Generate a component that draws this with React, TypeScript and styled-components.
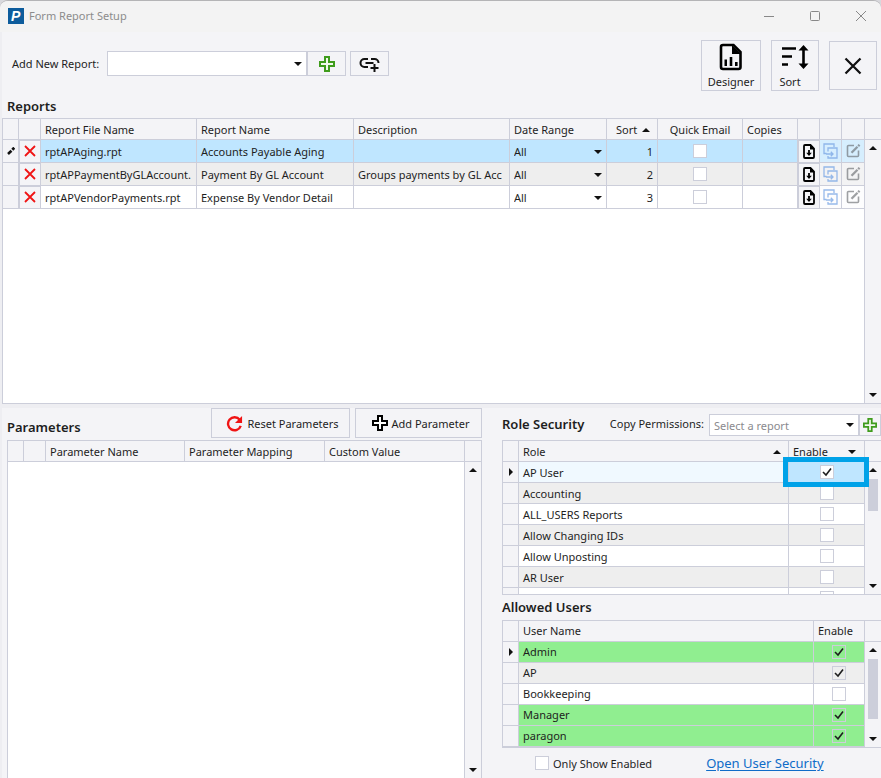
import React from "react";
import styled, { createGlobalStyle, css } from "styled-components";

const line = "#ccceda";
const panel = "#f4f4f7";
const ink = "#1e1e1e";

const GlobalStyle = createGlobalStyle`
  *, *::before, *::after { box-sizing: border-box; }
  body { margin: 0; background: #d8d8dc; }
  body, button, select, input {
    font-family: "Noto Sans", "Open Sans", sans-serif;
    font-size: 11px;
    color: ${ink};
  }
`;

const Window = styled.main`
  display: flex;
  flex-direction: column;
  height: 100vh;
  min-height: 640px;
  overflow: hidden;
  border-top: 1px solid #b4b4b6;
  border-radius: 8px 8px 0 0;
  background: #eeeef2;
`;

const TitleBar = styled.header`
  display: flex;
  align-items: center;
  flex: none;
  height: 31px;
  padding: 0 0 2px 8px;
  gap: 5px;
  background: #f3f3f3;
  color: #8c8c8c;
`;

const Title = styled.span`
  flex: 1;
  line-height: 16px;
`;

const WindowButton = styled.button`
  display: grid;
  place-items: center;
  width: 41px;
  height: 28px;
  padding: 0;
  border: 0;
  background: none;
`;

const Body = styled.div`
  display: flex;
  flex-direction: column;
  flex: 1;
  min-height: 0;
  padding-left: 2px;
`;

const ReportsPane = styled.section`
  display: flex;
  flex-direction: column;
  flex: 372 1 0;
  min-height: 0;
  background: ${panel};
`;

const Toolbar = styled.div`
  display: flex;
  justify-content: space-between;
  padding: 8px 4px 4px 10px;
`;

const AddReport = styled.div`
  display: flex;
  align-items: center;
  height: 47px;

  label { width: 95px; white-space: nowrap; }
`;

const Actions = styled.div`
  display: flex;
  align-items: center;
  gap: 10px;
`;

const Button = styled.button<{ $w?: number; $h?: number; $gap?: number }>`
  display: flex;
  align-items: center;
  justify-content: center;
  gap: ${(p) => p.$gap ?? 0}px;
  flex: none;
  width: ${(p) => (p.$w ? `${p.$w}px` : "auto")};
  height: ${(p) => p.$h ?? 25}px;
  padding: 0;
  border: 1px solid ${line};
  background: ${panel};
  white-space: nowrap;
`;

const LinkButton = styled(Button)`
  margin-left: 4px;
`;

const CommandButton = styled(Button)`
  padding-left: 4px;
`;

const TileButton = styled(Button)`
  flex-direction: column;
  padding-top: 2px;
  line-height: 16px;
`;

const SortLabel = styled.span`
  padding-right: 10px;
`;

const Heading = styled.h2<{ $h?: number }>`
  margin: 0;
  font-size: 13px;
  font-weight: 600;
  line-height: ${(p) => p.$h ?? 22}px;
  white-space: nowrap;
`;

const ReportsHeading = styled(Heading)`
  padding: 0 5px 1px;
`;

const Frame = styled.div<{ $grow?: number; $open?: boolean }>`
  display: flex;
  flex: ${(p) => p.$grow ?? 1} 1 0;
  min-height: 0;
  overflow: hidden;
  border: 1px solid ${line};
  border-width: ${(p) => (p.$open ? "1px 1px 0 1px" : "1px 0 1px 1px")};
  background: #fff;
`;

const TableArea = styled.div`
  flex: 1;
  min-width: 0;
  border-right: 1px solid ${line};
`;

const Table = styled.table<{ $row: number }>`
  width: 100%;
  table-layout: fixed;
  border-collapse: separate;
  border-spacing: 0;

  th, td {
    height: ${(p) => p.$row}px;
    padding: 1px 0 0 4px;
    border: solid ${line};
    border-width: 0 1px 1px 0;
    overflow: hidden;
    text-align: left;
    font-weight: 400;
    line-height: 16px;
    white-space: nowrap;
  }
  th { height: 21px; background: ${panel}; }
  th:last-child, td:last-child { border-right: 0; }
  tbody th { height: ${(p) => p.$row}px; padding: 0; text-align: center; line-height: 0; }
`;

const Col = styled.col<{ $w?: number }>`
  width: ${(p) => (p.$w ? `${p.$w}px` : "auto")};
`;

type Tone = "plain" | "alt" | "selected" | "current" | "green";
const tones: Record<Tone, string> = {
  plain: "#ffffff",
  alt: "#eeeeee",
  selected: "#bfe6ff",
  current: "#f0f9ff",
  green: "#90ee90",
};

const Row = styled.tr<{ $tone: Tone }>`
  td { background: ${(p) => tones[p.$tone]}; }
`;

const NumberCell = styled.td`
  && { padding-right: 4px; text-align: right; }
`;

const centered = css`
  && { padding: 0; text-align: center; line-height: 0; }
`;
const CenterCell = styled.td`${centered}`;
const CenterHead = styled.th`&& { padding: 1px 0 0; text-align: center; }`;

const MarkedCell = styled(CenterCell)`
  && { position: relative; overflow: visible; background: ${tones.selected}; }

  &::after {
    content: "";
    position: absolute;
    z-index: 1;
    inset: -5px -5px -5px -6px;
    border: 5px solid #00a2e8;
    pointer-events: none;
  }
`;

const HeadSplit = styled.div<{ $pad: number }>`
  display: flex;
  align-items: center;
  justify-content: space-between;
  padding-right: ${(p) => p.$pad}px;
`;

const SortHeadText = styled.span`
  padding-left: 5px;
`;

const CellButton = styled.button<{ $faded?: boolean }>`
  display: grid;
  place-items: center;
  width: 100%;
  height: 22px;
  padding: 0;
  border: solid ${line};
  border-width: ${(p) => (p.$faded ? "0" : "1px 0 0 1px")};
  background: ${(p) => (p.$faded ? "rgba(250, 250, 252, 0.4)" : panel)};
`;

const DeleteButton = styled(CellButton)`
  padding-bottom: 2px;
`;

const ScrollTrack = styled.div`
  display: flex;
  flex-direction: column;
  align-items: center;
  flex: none;
  width: 16px;
  background: ${panel};
`;

const ScrollCap = styled.div`
  flex: none;
  width: 100%;
  height: 21px;
  border-bottom: 1px solid ${line};
`;

const ScrollButton = styled.button`
  display: grid;
  place-items: center;
  flex: none;
  width: 16px;
  height: 16px;
  padding: 0;
  border: 0;
  background: none;
`;

const Thumb = styled.div<{ $share: number }>`
  width: 10px;
  flex: ${(p) => p.$share} 1 0;
  background: ${line};
`;

const Spare = styled.div<{ $share: number }>`
  flex: ${(p) => p.$share} 1 0;
`;

const SelectBox = styled.div<{ $w?: number; $h?: number; $bare?: boolean }>`
  display: grid;
  align-items: center;
  width: ${(p) => (p.$w ? `${p.$w}px` : "100%")};
  height: ${(p) => p.$h ?? 25}px;
  border: ${(p) => (p.$bare ? "0" : `1px solid ${line}`)};
  background: ${(p) => (p.$bare ? "transparent" : "#fff")};

  > * { grid-area: 1 / 1; }
  > svg { justify-self: end; margin-right: 4px; pointer-events: none; }
`;

const Select = styled.select<{ $bare?: boolean; $muted?: boolean }>`
  appearance: none;
  width: 100%;
  height: 100%;
  padding: 0 16px 0 ${(p) => (p.$bare ? 0 : 4)}px;
  border: 0;
  background: transparent;
  color: ${(p) => (p.$muted ? "#8a8a8e" : ink)};
`;

const Lower = styled.div`
  display: grid;
  grid-template-columns: minmax(0, 480fr) minmax(0, 379fr);
  column-gap: 20px;
  flex: 370 1 0;
  min-height: 0;
  margin-top: 4px;
  background: ${panel};
`;

const ParametersPane = styled.section`
  display: flex;
  flex-direction: column;
  min-height: 0;
  padding-left: 5px;
`;

const SecurityPane = styled.section`
  display: flex;
  flex-direction: column;
  min-height: 0;
`;

const PaneHeader = styled.div`
  display: flex;
  align-items: flex-start;
  flex: none;
  height: 32px;
`;

const ParametersHeading = styled(Heading)`
  flex: 1;
`;

const ButtonPair = styled.div`
  display: flex;
  gap: 5px;
`;

const CopyPermissions = styled.div`
  display: flex;
  flex: 1;
  justify-content: flex-end;

  label { line-height: 32px; padding-right: 5px; white-space: nowrap; }
`;

const CopyControls = styled.div`
  display: flex;
  padding-top: 6px;
`;

const UsersHeading = styled(Heading)`
  flex: none;
`;

const Footer = styled.footer`
  display: flex;
  align-items: center;
  flex: none;
  height: 30px;
  padding-left: 33px;
  gap: 54px;

  label { display: flex; align-items: center; gap: 4px; white-space: nowrap; }
  a { color: #0f6cc8; font-size: 13px; white-space: nowrap; text-underline-offset: 2px; }
`;

const CheckBox = styled.span`
  display: inline-grid;
  place-items: center;
  vertical-align: middle;

  > * { grid-area: 1 / 1; }
  > svg { pointer-events: none; }
`;

const CheckInput = styled.input<{ $clear?: boolean }>`
  appearance: none;
  width: 14px;
  height: 14px;
  margin: 0;
  border: 1px solid ${line};
  background: ${(p) => (p.$clear ? "transparent" : "#fff")};
`;

function Check({ label, on = false, clear = false, id }: { label?: string; on?: boolean; clear?: boolean; id?: string }) {
  const [checked, setChecked] = React.useState(on);
  return (
    <CheckBox>
      <CheckInput id={id} type="checkbox" aria-label={label} checked={checked} $clear={clear} onChange={(e) => setChecked(e.target.checked)} />
      {checked && (
        <svg width="10" height="10" viewBox="0 0 10 10">
          <path d="M1 5l3 3 5-6.5" fill="none" stroke="#1e1e1e" strokeWidth="1.6" />
        </svg>
      )}
    </CheckBox>
  );
}

const Arrow = ({ up = false }: { up?: boolean }) => (
  <svg width="8" height="4" viewBox="0 0 8 4">
    <path d={up ? "M0 4L4 0l4 4z" : "M0 0h8L4 4z"} fill="#111" />
  </svg>
);

const Pointer = () => (
  <svg width="4" height="8" viewBox="0 0 4 8">
    <path d="M0 0l4 4-4 4z" fill="#111" />
  </svg>
);

const Plus = ({ size = 16, color = "#3f9c1c", fill = "#f1f9ec", stroke = 2 }: { size?: number; color?: string; fill?: string; stroke?: number }) => (
  <svg width={size} height={size} viewBox="0 0 16 16">
    <path d="M6 1h4v5h5v4h-5v5H6v-5H1V6h5z" fill={fill} stroke={color} strokeWidth={stroke} />
  </svg>
);

const Cross = ({ size, color, stroke }: { size: number; color: string; stroke: number }) => (
  <svg width={size} height={size} viewBox="0 0 12 12">
    <path d="M1 1l10 10M11 1L1 11" stroke={color} strokeWidth={stroke} fill="none" />
  </svg>
);

const Logo = () => (
  <svg width="16" height="16" viewBox="0 0 16 16">
    <rect width="16" height="16" fill="#0d5c9c" />
    <text x="3" y="13" fill="#fff" fontFamily="Liberation Sans, sans-serif" fontSize="14" fontStyle="italic" fontWeight="700">P</text>
  </svg>
);

const LinkPlus = () => (
  <svg width="21" height="16" viewBox="0 0 21 16" fill="none" stroke="#111" strokeWidth="2">
    <path d="M9 3H5.500a4 4 0 0 0 0 8H9M12 3h3.500a4 4 0 0 1 4 4M6.500 7h8M15.500 8v8M11.500 12h8" />
  </svg>
);

const Chart = () => (
  <svg width="24" height="28" viewBox="0 0 24 28">
    <path d="M4 2h10.500l7 7v15a2 2 0 0 1-2 2H4a2 2 0 0 1-2-2V4a2 2 0 0 1 2-2z" fill="none" stroke="#000" strokeWidth="2.600" />
    <path d="M13 2l9 9h-9zM5.500 16.500H8V23H5.500zM10.700 14h2.600v9h-2.600zM16 19h2.600v4H16z" fill="#000" />
  </svg>
);

const SortIcon = () => (
  <svg width="28" height="26" viewBox="0 0 28 26">
    <path d="M1 4.500h14M1 12.500h10M1 20.500h6M22.500 4v17" stroke="#000" strokeWidth="2.600" fill="none" />
    <path d="M22.500 1l5 5.500h-10zM22.500 25l5-5.500h-10z" fill="#000" />
  </svg>
);

const ResetIcon = () => (
  <svg width="17" height="17" viewBox="0 0 18 18">
    <path d="M14.500 5A6.900 6.900 0 1 0 15.600 11.500" fill="none" stroke="#f01414" strokeWidth="2.500" />
    <path d="M17 1v7.500H9.500z" fill="#f01414" />
  </svg>
);

const Pencil = () => (
  <svg width="8" height="8" viewBox="0 0 8 8">
    <path d="M1 7l3.500-3.200" stroke="#111" strokeWidth="2.600" />
    <path d="M5.300 2.700l2-2" stroke="#111" strokeWidth="2.800" />
  </svg>
);

const FileDown = () => (
  <svg width="12" height="15" viewBox="0 0 12 15">
    <path d="M2 1h5.500L11 4.500V13a1 1 0 0 1-1 1H2a1 1 0 0 1-1-1V2a1 1 0 0 1 1-1z" fill="none" stroke="#000" strokeWidth="1.800" />
    <path d="M7 1l4.500 4.500H7zM5.100 6h1.800v2.800h1.900L6 12 3.200 8.800h1.900z" fill="#000" />
  </svg>
);

const CopyIcon = () => (
  <svg width="15" height="16" viewBox="0 0 15 16" fill="none" stroke="#7da9e6" strokeWidth="1.300" opacity="0.8">
    <path d="M3.500 10.500H1V1h10v3M5 8.500V5h9v10H5v-2M3 11h7M7.800 8.800L10 11l-2.200 2.200" />
  </svg>
);

const EditIcon = () => (
  <svg width="15" height="14" viewBox="0 0 15 14" fill="none" stroke="#606468" opacity="0.600">
    <path d="M8 1.500H2.500a1 1 0 0 0-1 1v9a1 1 0 0 0 1 1h9a1 1 0 0 0 1-1V6.500" strokeWidth="1.600" />
    <path d="M5.500 8.800l6-6M12.200 2.100l1.300-1.300" strokeWidth="2.300" />
  </svg>
);

function Scroll({ before = 0, thumb = 0, after = 1 }: { before?: number; thumb?: number; after?: number }) {
  return (
    <ScrollTrack>
      <ScrollCap />
      <ScrollButton aria-label="Scroll up"><Arrow up /></ScrollButton>
      {before > 0 && <Spare $share={before} />}
      {thumb > 0 && <Thumb $share={thumb} />}
      <Spare $share={after} />
      <ScrollButton aria-label="Scroll down"><Arrow /></ScrollButton>
    </ScrollTrack>
  );
}

const reports: { file: string; name: string; text: string; tone: Tone }[] = [
  { file: "rptAPAging.rpt", name: "Accounts Payable Aging", text: "", tone: "selected" },
  { file: "rptAPPaymentByGLAccount.", name: "Payment By GL Account", text: "Groups payments by GL Acc", tone: "alt" },
  { file: "rptAPVendorPayments.rpt", name: "Expense By Vendor Detail", text: "", tone: "plain" },
];

const roles = ["Accounting", "ALL_USERS Reports", "Allow Changing IDs", "Allow Unposting", "AR User", ""];

const users: { name: string; on: boolean; tone: Tone }[] = [
  { name: "Admin", on: true, tone: "green" },
  { name: "AP", on: true, tone: "alt" },
  { name: "Bookkeeping", on: false, tone: "plain" },
  { name: "Manager", on: true, tone: "green" },
  { name: "paragon", on: true, tone: "green" },
];

function ReportsTable() {
  return (
    <Table $row={23}>
      <colgroup>
        {[16, 22, 156, 157, 0, 97, 51, 85, 55, 22, 22, 22].map((w, i) => <Col key={i} $w={w} />)}
      </colgroup>
      <thead>
        <tr>
          <th /><th />
          <th>Report File Name</th>
          <th>Report Name</th>
          <th>Description</th>
          <th>Date Range</th>
          <th><HeadSplit $pad={7}><SortHeadText>Sort</SortHeadText><Arrow up /></HeadSplit></th>
          <CenterHead>Quick Email</CenterHead>
          <th>Copies</th>
          <th /><th /><th />
        </tr>
      </thead>
      <tbody>
        {reports.map((r, i) => (
          <Row key={r.file} $tone={r.tone}>
            <th>{i === 0 && <Pencil />}</th>
            <CenterCell><DeleteButton aria-label={`Delete ${r.file}`}><Cross size={12} color="#f01414" stroke={1.8} /></DeleteButton></CenterCell>
            <td>{r.file}</td>
            <td>{r.name}</td>
            <td>{r.text}</td>
            <td>
              <SelectBox $bare $h={20}>
                <Select $bare aria-label={`Date range for ${r.file}`}><option>All</option></Select>
                <Arrow />
              </SelectBox>
            </td>
            <NumberCell>{i + 1}</NumberCell>
            <CenterCell><Check label={`Quick email ${r.file}`} /></CenterCell>
            <td />
            <CenterCell><CellButton aria-label="Download"><FileDown /></CellButton></CenterCell>
            <CenterCell><CellButton $faded aria-label="Copy"><CopyIcon /></CellButton></CenterCell>
            <CenterCell><CellButton $faded aria-label="Edit"><EditIcon /></CellButton></CenterCell>
          </Row>
        ))}
      </tbody>
    </Table>
  );
}

export default function App() {
  return (
    <>
      <GlobalStyle />
      <Window>
        <TitleBar>
          <Logo />
          <Title>Form Report Setup</Title>
          <WindowButton aria-label="Minimize">
            <svg width="10" height="10" viewBox="0 0 10 10"><path d="M0 5.500h10" stroke="#888" /></svg>
          </WindowButton>
          <WindowButton aria-label="Maximize">
            <svg width="10" height="10" viewBox="0 0 10 10"><rect x="0.500" y="0.500" width="9" height="9" rx="1" fill="none" stroke="#888" /></svg>
          </WindowButton>
          <WindowButton aria-label="Close window"><Cross size={12} color="#888" stroke={1} /></WindowButton>
        </TitleBar>
        <Body>
          <ReportsPane>
            <Toolbar>
              <AddReport>
                <label htmlFor="new-report">Add New Report:</label>
                <SelectBox $w={200}>
                  <Select id="new-report"><option /></Select>
                  <Arrow />
                </SelectBox>
                <Button $w={39} aria-label="Add report"><Plus /></Button>
                <LinkButton $w={39} aria-label="Add link"><LinkPlus /></LinkButton>
              </AddReport>
              <Actions>
                <TileButton $w={60} $h={51} $gap={3}><Chart />Designer</TileButton>
                <TileButton $w={48} $h={51} $gap={4}><SortIcon /><SortLabel>Sort</SortLabel></TileButton>
                <Button $w={48} $h={49} aria-label="Close"><Cross size={18} color="#111" stroke={1.5} /></Button>
              </Actions>
            </Toolbar>
            <ReportsHeading>Reports</ReportsHeading>
            <Frame>
              <TableArea><ReportsTable /></TableArea>
              <Scroll />
            </Frame>
          </ReportsPane>
          <Lower>
            <ParametersPane>
              <PaneHeader>
                <ParametersHeading $h={38}>Parameters</ParametersHeading>
                <ButtonPair>
                  <CommandButton $w={139} $h={30} $gap={4}><ResetIcon />Reset Parameters</CommandButton>
                  <CommandButton $w={127} $h={30} $gap={4}><Plus color="#000" fill="#fff" />Add Parameter</CommandButton>
                </ButtonPair>
              </PaneHeader>
              <Frame $open>
                <TableArea>
                  <Table $row={21}>
                    <colgroup>{[16, 22, 139, 140, 0].map((w, i) => <Col key={i} $w={w} />)}</colgroup>
                    <thead>
                      <tr><th /><th /><th>Parameter Name</th><th>Parameter Mapping</th><th>Custom Value</th></tr>
                    </thead>
                  </Table>
                </TableArea>
                <Scroll />
              </Frame>
            </ParametersPane>
            <SecurityPane>
              <PaneHeader>
                <Heading $h={32}>Role Security</Heading>
                <CopyPermissions>
                  <label htmlFor="copy-from">Copy Permissions:</label>
                  <CopyControls>
                    <SelectBox $w={150} $h={22}>
                      <Select id="copy-from" $muted><option>Select a report</option></Select>
                      <Arrow />
                    </SelectBox>
                    <Button $w={22} $h={22} aria-label="Copy permissions"><Plus size={14} /></Button>
                  </CopyControls>
                </CopyPermissions>
              </PaneHeader>
              <Frame $grow={155}>
                <TableArea>
                  <Table $row={21}>
                    <colgroup>{[16, 0, 75].map((w, i) => <Col key={i} $w={w} />)}</colgroup>
                    <thead>
                      <tr>
                        <th />
                        <th><HeadSplit $pad={7}>Role<Arrow up /></HeadSplit></th>
                        <th><HeadSplit $pad={8}>Enable<Arrow /></HeadSplit></th>
                      </tr>
                    </thead>
                    <tbody>
                      <Row $tone="current">
                        <th><Pointer /></th>
                        <td>AP User</td>
                        <MarkedCell><Check on label="Enable AP User" /></MarkedCell>
                      </Row>
                      {roles.map((role, i) => (
                        <Row key={role} $tone={i % 2 ? "plain" : "alt"}>
                          <th />
                          <td>{role}</td>
                          <CenterCell><Check label={`Enable ${role}`} /></CenterCell>
                        </Row>
                      ))}
                    </tbody>
                  </Table>
                </TableArea>
                <Scroll before={1} thumb={32} after={67} />
              </Frame>
              <UsersHeading $h={25}>Allowed Users</UsersHeading>
              <Frame $grow={128}>
                <TableArea>
                  <Table $row={21}>
                    <colgroup>{[16, 0, 50].map((w, i) => <Col key={i} $w={w} />)}</colgroup>
                    <thead>
                      <tr><th /><th>User Name</th><th>Enable</th></tr>
                    </thead>
                    <tbody>
                      {users.map((u, i) => (
                        <Row key={u.name} $tone={u.tone}>
                          <th>{i === 0 && <Pointer />}</th>
                          <td>{u.name}</td>
                          <CenterCell><Check on={u.on} clear label={`Enable ${u.name}`} /></CenterCell>
                        </Row>
                      ))}
                    </tbody>
                  </Table>
                </TableArea>
                <Scroll before={1} thumb={61} after={12} />
              </Frame>
              <Footer>
                <label htmlFor="only-enabled"><Check id="only-enabled" />Only Show Enabled</label>
                <a href="#user-security">Open User Security</a>
              </Footer>
            </SecurityPane>
          </Lower>
        </Body>
      </Window>
    </>
  );
}
